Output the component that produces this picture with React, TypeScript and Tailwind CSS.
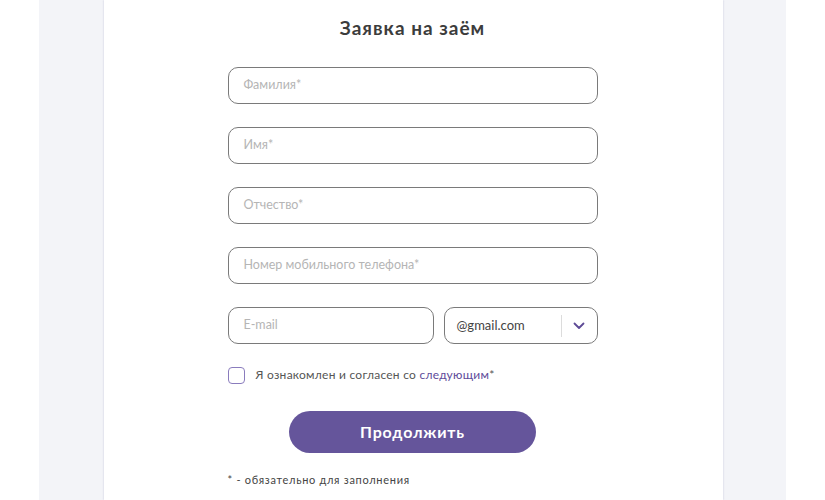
const font = { fontFamily: '"Lato", "Noto Sans", sans-serif' };

const Field = ({ placeholder }: { placeholder: string }) => (
  <div className="h-[37px] w-full rounded-[10px] border border-[#7a7a7a] flex items-center px-[15px]">
    <span className="text-[12.5px] text-[#b5b5b5]">{placeholder}</span>
  </div>
);

export default function App() {
  return (
    <div className="w-[825px] h-[500px] bg-white flex overflow-hidden" style={font}>
      <div className="ml-[39px] w-[747px] h-full bg-[#f3f4f8] flex pl-[65px]">
        <div className="w-[619px] h-full bg-white pr-[2px] shadow-[0_0_2px_rgba(120,120,170,0.35)] flex flex-col items-center">
          <h1 className="mt-[17px] h-[22px] text-[19px] leading-[22px] font-bold tracking-[1px] text-[#3c3c3c]">
            Заявка на заём
          </h1>
          <div className="mt-[28px] w-[370px] flex flex-col gap-[23px]">
            <Field placeholder="Фамилия*" />
            <Field placeholder="Имя*" />
            <Field placeholder="Отчество*" />
            <Field placeholder="Номер мобильного телефона*" />
            <div className="flex gap-[10px]">
              <div className="w-[206px]">
                <Field placeholder="E-mail" />
              </div>
              <div className="flex-1 h-[37px] rounded-[10px] border border-[#7a7a7a] flex items-center pl-[12px]">
                <span className="flex-1 text-[13px] text-[#444]">@gmail.com</span>
                <div className="w-px h-[22px] bg-[#dcdcdc]" />
                <div className="w-[35px] flex justify-center">
                  <svg width="12" height="8" viewBox="0 0 12 8" fill="none">
                    <path d="M1.5 1.5 L6 6 L10.5 1.5" stroke="#5d4a96" strokeWidth="1.8" strokeLinecap="round" strokeLinejoin="round" />
                  </svg>
                </div>
              </div>
            </div>
          </div>
          <div className="mt-[22px] w-[370px] flex items-center gap-[11px]">
            <div className="w-[17px] h-[17px] rounded-[4px] border-[1.5px] border-[#8a7cbd]" />
            <span className="text-[12px] tracking-[0.25px] text-[#555]">
              Я ознакомлен и согласен со <span className="text-[#5e4b9a]">следующим</span>*
            </span>
          </div>
          <button className="mt-[27px] w-[247px] h-[42px] rounded-full bg-[#65559b] text-white text-[16px] tracking-[0.8px] font-bold">
            Продолжить
          </button>
          <div className="mt-[19px] w-[370px] text-[11px] tracking-[0.7px] text-[#444]">* - обязательно для заполнения</div>
        </div>
      </div>
    </div>
  );
}
